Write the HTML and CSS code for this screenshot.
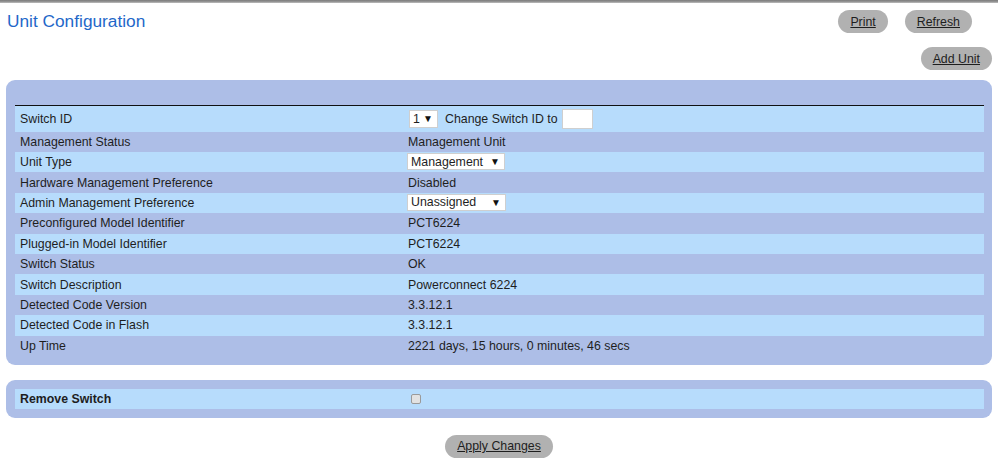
FILE: index.html
```html
<!DOCTYPE html>
<html>
<head>
<meta charset="utf-8">
<title>Unit Configuration</title>
<link rel="stylesheet" href="styles.css">
</head>
<body>
<div class="topbar"></div>
<div class="page-head">
  <h1 class="title">Unit Configuration</h1>
  <div class="actions">
    <a class="btn" href="#">Print</a>
    <a class="btn" href="#">Refresh</a>
  </div>
</div>
<div class="add-row">
  <a class="btn" href="#">Add Unit</a>
</div>

<div class="panel">
  <div class="panel-head"></div>
  <div class="rows">
    <div class="row light first">
      <div class="label">Switch ID</div>
      <div class="value">
        <span class="sel sel-id"><select><option>1</option></select></span>
        <span class="change">Change Switch ID to</span>
        <input class="txt" type="text">
      </div>
    </div>
    <div class="row"><div class="label">Management Status</div><div class="value">Management Unit</div></div>
    <div class="row light"><div class="label">Unit Type</div><div class="value"><span class="sel sel-wide"><select><option>Management</option></select></span></div></div>
    <div class="row"><div class="label">Hardware Management Preference</div><div class="value">Disabled</div></div>
    <div class="row light"><div class="label">Admin Management Preference</div><div class="value"><span class="sel sel-wide2"><select><option>Unassigned</option></select></span></div></div>
    <div class="row"><div class="label">Preconfigured Model Identifier</div><div class="value">PCT6224</div></div>
    <div class="row light"><div class="label">Plugged-in Model Identifier</div><div class="value">PCT6224</div></div>
    <div class="row"><div class="label">Switch Status</div><div class="value">OK</div></div>
    <div class="row light"><div class="label">Switch Description</div><div class="value">Powerconnect 6224</div></div>
    <div class="row"><div class="label">Detected Code Version</div><div class="value">3.3.12.1</div></div>
    <div class="row light"><div class="label">Detected Code in Flash</div><div class="value">3.3.12.1</div></div>
    <div class="row"><div class="label">Up Time</div><div class="value">2221 days, 15 hours, 0 minutes, 46 secs</div></div>
  </div>
</div>

<div class="panel panel-small">
  <div class="rows">
    <div class="row light">
      <div class="label bold">Remove Switch</div>
      <div class="value"><input class="chk" type="checkbox"></div>
    </div>
  </div>
</div>

<div class="apply-row">
  <a class="btn" href="#">Apply Changes</a>
</div>
</body>
</html>
```

FILE: styles.css
```css
* { box-sizing: border-box; }

body {
  margin: 0;
  font-family: "Liberation Sans", Arial, sans-serif;
  font-size: 12.35px;
  color: #1e1e1e;
  background: #fff;
}

.topbar {
  height: 3px;
  background: linear-gradient(#7a7a7a, #9a9a9a 66%, #c4c4c4);
}

.page-head {
  display: flex;
  justify-content: space-between;
  align-items: flex-start;
  padding: 7px 26px 0 7px;
}

.title {
  margin: 1px 0 0 0;
  font-size: 17.3px;
  line-height: 20px;
  font-weight: normal;
  color: #1f68c9;
}

.actions {
  display: flex;
  gap: 17px;
}

.btn {
  display: inline-flex;
  align-items: center;
  height: 23px;
  padding: 0 12px 0 12px;
  border-radius: 12px;
  background: #b1b1b1;
  color: #1e1e1e;
  text-decoration: underline;
  font-size: 12.35px;
}

.add-row {
  display: flex;
  justify-content: flex-end;
  padding: 14px 6px 0 0;
}

.panel {
  margin: 10px 6px 0 6px;
  padding: 0 8px 9px 9px;
  background: #adbee7;
  border-radius: 9px;
}

.panel-head {
  height: 26px;
  border-bottom: 1px solid #111;
}

.row {
  display: grid;
  grid-template-columns: 388px 1fr;
  height: 20.4px;
  align-items: center;
}

.row.first { height: 25.6px; }

.row.light { background: #b7dcfc; }

.label { padding-left: 5px; }
.label.bold { font-weight: bold; }

.value {
  padding-left: 5px;
  display: flex;
  align-items: center;
}

.sel {
  position: relative;
  display: inline-block;
  height: 18px;
}

.sel select {
  appearance: none;
  -webkit-appearance: none;
  height: 18px;
  border: 1px solid #cfcfcf;
  border-radius: 0;
  background: #fff;
  font-family: "Liberation Sans", Arial, sans-serif;
  font-size: 12.35px;
  color: #1e1e1e;
  padding: 0 0 0 3px;
  margin: 0;
  outline: none;
}

.sel::after {
  content: "\25BC";
  position: absolute;
  right: 5px;
  top: 3px;
  font-size: 10px;
  line-height: 11px;
  color: #111;
  pointer-events: none;
}

.sel-id { margin-left: 1px; }
.sel-id select { width: 29px; }
.sel-wide { margin-left: -1px; }
.sel-wide select { width: 98px; height: 17px; }
.sel-wide2 { margin-left: -1px; }
.sel-wide2 select { width: 99px; height: 17px; }

.change { margin-left: 7px; }

.txt {
  margin: 0 0 0 4px;
  width: 31px;
  height: 20px;
  border: 1px solid #cfcfcf;
  background: #fff;
  padding: 0;
}

.chk {
  appearance: none;
  -webkit-appearance: none;
  margin: 0 0 0 3px;
  width: 10px;
  height: 10px;
  border: 1px solid #9a9a9a;
  border-radius: 2px;
  background: #e2e2e2;
}

.panel-small {
  margin-top: 15px;
  padding-top: 9px;
}

.panel-small .row { height: 20px; }

.apply-row {
  display: flex;
  justify-content: center;
  padding-top: 17px;
}
```
